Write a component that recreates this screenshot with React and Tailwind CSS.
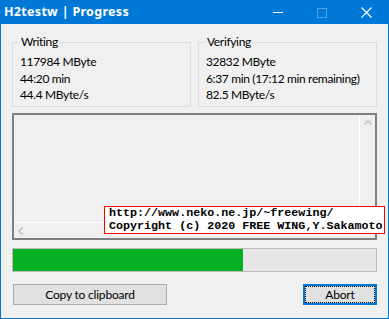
import React from 'react';

const ui = { fontFamily: 'Lato, "Noto Sans", "Noto Sans CJK JP", sans-serif' };
const title = { fontFamily: '"Noto Sans", "Noto Sans CJK JP", sans-serif' };
const mono = { fontFamily: '"Liberation Mono", "DejaVu Sans Mono", monospace' };

const GroupBox = ({ title, lines }) => (
    <div className="w-[179px] h-[65px] border border-[#dcdcdc] pl-[7px] text-[12px] tracking-[-0.35px]">
        <div className="-mt-[9px] w-fit bg-[#f0f0f0] px-[1px] leading-[16px]">{title}</div>
        <div className="mt-[4px] leading-[16.5px]">
            {lines.map((line) => (
                <div key={line} className="whitespace-nowrap">{line}</div>
            ))}
        </div>
    </div>
);

const TitleBar = () => (
    <div className="h-[23px] bg-[#0078d7] flex items-center text-white">
        <span className="pl-[3px] text-[12.5px] font-bold tracking-[0.3px] flex-1" style={title}>
            H2testw | Progress
        </span>
        <div className="w-[44px] h-full flex items-center justify-center">
            <div className="w-[10px] h-px bg-white" />
        </div>
        <div className="w-[44px] h-full flex items-center justify-center">
            <div className="w-[10px] h-[10px] border border-[#4ea3e6]" />
        </div>
        <div className="w-[44px] h-full flex items-center justify-center">
            <svg width="11" height="11" viewBox="0 0 11 11" fill="none" stroke="white" strokeWidth="1.1">
                <path d="M0.5 0.5 L10.5 10.5 M10.5 0.5 L0.5 10.5" />
            </svg>
        </div>
    </div>
);

const ListBox = () => (
    <div className="mt-[6px] h-[127px] border-2 border-[#7f7f7f] flex flex-col">
        <div className="flex flex-1">
            <div className="flex-1" />
            <div className="w-[16px] border-l border-white flex justify-center pt-[5px]">
                <svg width="8" height="5" viewBox="0 0 8 5" fill="none" stroke="#c4c4c4" strokeWidth="1.6">
                    <path d="M0.5 4.5 L4 1 L7.5 4.5" />
                </svg>
            </div>
        </div>
        <div className="h-[16px] border-t border-white flex items-center pl-[4px]">
            <svg width="5" height="8" viewBox="0 0 5 8" fill="none" stroke="#c4c4c4" strokeWidth="1.6">
                <path d="M4.5 0.5 L1 4 L4.5 7.5" />
            </svg>
        </div>
    </div>
);

export default function App() {
    return (
        <div className="relative w-[389px] h-[319px] bg-[#f0f0f0] border border-[#0078d7] text-black overflow-hidden" style={ui}>
            <TitleBar />
            <div className="px-[11px] pt-[18px]">
                <div className="flex gap-[7px]">
                    <GroupBox title="Writing" lines={['117984 MByte', '44:20 min', '44.4 MByte/s']} />
                    <GroupBox title="Verifying" lines={['32832 MByte', '6:37 min (17:12 min remaining)', '82.5 MByte/s']} />
                </div>
                <ListBox />
                <div className="mt-[8px] h-[24px] border border-[#bcbcbc] bg-[#e6e6e6]">
                    <div className="h-full w-[230px] bg-[#06b025]" />
                </div>
                <div className="mt-[12px] flex justify-between text-[12px] tracking-[-0.2px]">
                    <button className="ml-[1px] w-[154px] h-[21px] border border-[#adadad] bg-[#e1e1e1] leading-none">
                        Copy to clipboard
                    </button>
                    <button className="w-[74px] h-[21px] border-2 border-[#0078d7] bg-[#e1e1e1] p-0">
                        <div className="h-full border border-dotted border-black flex items-center justify-center leading-none">
                            Abort
                        </div>
                    </button>
                </div>
            </div>
            <div className="absolute left-[103px] top-[205px] w-[281px] h-[28px] bg-white border border-[#ff0000] pl-[4px] text-[11.7px] leading-[13px] font-bold whitespace-nowrap" style={mono}>
                <div>http://www.neko.ne.jp/~freewing/</div>
                <div>Copyright (c) 2020 FREE WING,Y.Sakamoto</div>
            </div>
        </div>
    );
}
